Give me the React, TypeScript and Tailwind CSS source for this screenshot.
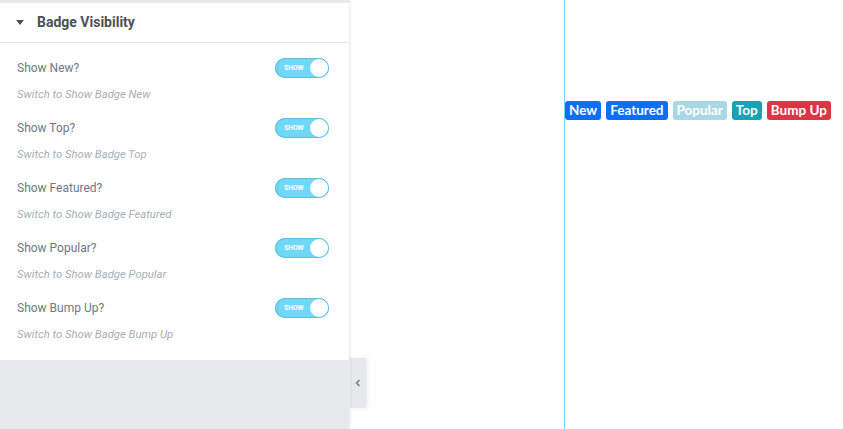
const ROWS = [
  { label: 'Show New?', hint: 'Switch to Show Badge New' },
  { label: 'Show Top?', hint: 'Switch to Show Badge Top' },
  { label: 'Show Featured?', hint: 'Switch to Show Badge Featured' },
  { label: 'Show Popular?', hint: 'Switch to Show Badge Popular' },
  { label: 'Show Bump Up?', hint: 'Switch to Show Badge Bump Up' },
];

const BADGES = [
  { text: 'New', cls: 'bg-[#0d6efd]' },
  { text: 'Featured', cls: 'bg-[#0d6efd]' },
  { text: 'Popular', cls: 'bg-[#a9d8e4]' },
  { text: 'Top', cls: 'bg-[#17a2b8]' },
  { text: 'Bump Up', cls: 'bg-[#dc3545]' },
];

function Toggle() {
  return (
    <div className="relative w-[54px] h-[20px] rounded-full bg-[#71d7f7] shadow-[inset_0_0_0_1px_#5bc0de]">
      <span className="absolute left-[9px] top-[5px] text-[7px] leading-[10px] font-bold text-white tracking-tight">
        SHOW
      </span>
      <span className="absolute right-[1px] top-[1px] w-[18px] h-[18px] rounded-full bg-white" />
    </div>
  );
}

export default function App() {
  return (
    <div className="w-[843px] h-[429px] flex bg-white overflow-hidden" style={{ fontFamily: 'Roboto, sans-serif' }}>
      {/* Editor panel */}
      <div className="w-[350px] flex flex-col bg-[#e6e9ec] border-r border-[#eceef0] shadow-[1px_0_3px_rgba(0,0,0,0.05)] z-10">
        <div className="h-[3px] bg-[#e6e9ec]" />
        <div className="bg-white">
          <div className="h-[40px] flex items-center px-[16px] border-b border-[#e6e9ec]">
            <svg width="8" height="5" viewBox="0 0 8 5" className="mr-[13px]">
              <path d="M0 0h8L4 5z" fill="#495157" />
            </svg>
            <span className="text-[14px] font-bold text-[#495157]">Badge Visibility</span>
          </div>
          <div className="pt-[5px] pb-[12px]">
            {ROWS.map(row => (
              <div key={row.label} className="h-[60px] px-[17px] pt-[10px]">
                <div className="flex items-center justify-between pr-[3px]">
                  <span className="text-[12px] text-[#6d7882]">{row.label}</span>
                  <Toggle />
                </div>
                <p className="mt-[9px] text-[11.3px] italic text-[#a4afb7]">{row.hint}</p>
              </div>
            ))}
          </div>
        </div>
      </div>

      {/* Collapse handle */}
      <div className="w-[214px] relative">
        <div className="absolute left-0 top-[358px] w-[16px] h-[50px] bg-[#e6e9ec] flex items-center justify-center shadow-[2px_0_4px_rgba(0,0,0,0.08)]">
          <svg width="6" height="8" viewBox="0 0 6 8">
            <path d="M4.5 1L1.5 4l3 3" stroke="#6d7882" strokeWidth="1.4" fill="none" />
          </svg>
        </div>
      </div>
      <div className="w-px bg-[#71d7f7]" />

      {/* Preview canvas */}
      <div className="flex-1 pt-[101px]">
        <div className="flex gap-[5px]" style={{ fontFamily: 'Lato, sans-serif' }}>
          {BADGES.map(b => (
            <span
              key={b.text}
              className={`${b.cls} h-[19px] px-[4px] rounded-[3px] text-white text-[13.5px] font-bold leading-[19px]`}
            >
              {b.text}
            </span>
          ))}
        </div>
      </div>
    </div>
  );
}
